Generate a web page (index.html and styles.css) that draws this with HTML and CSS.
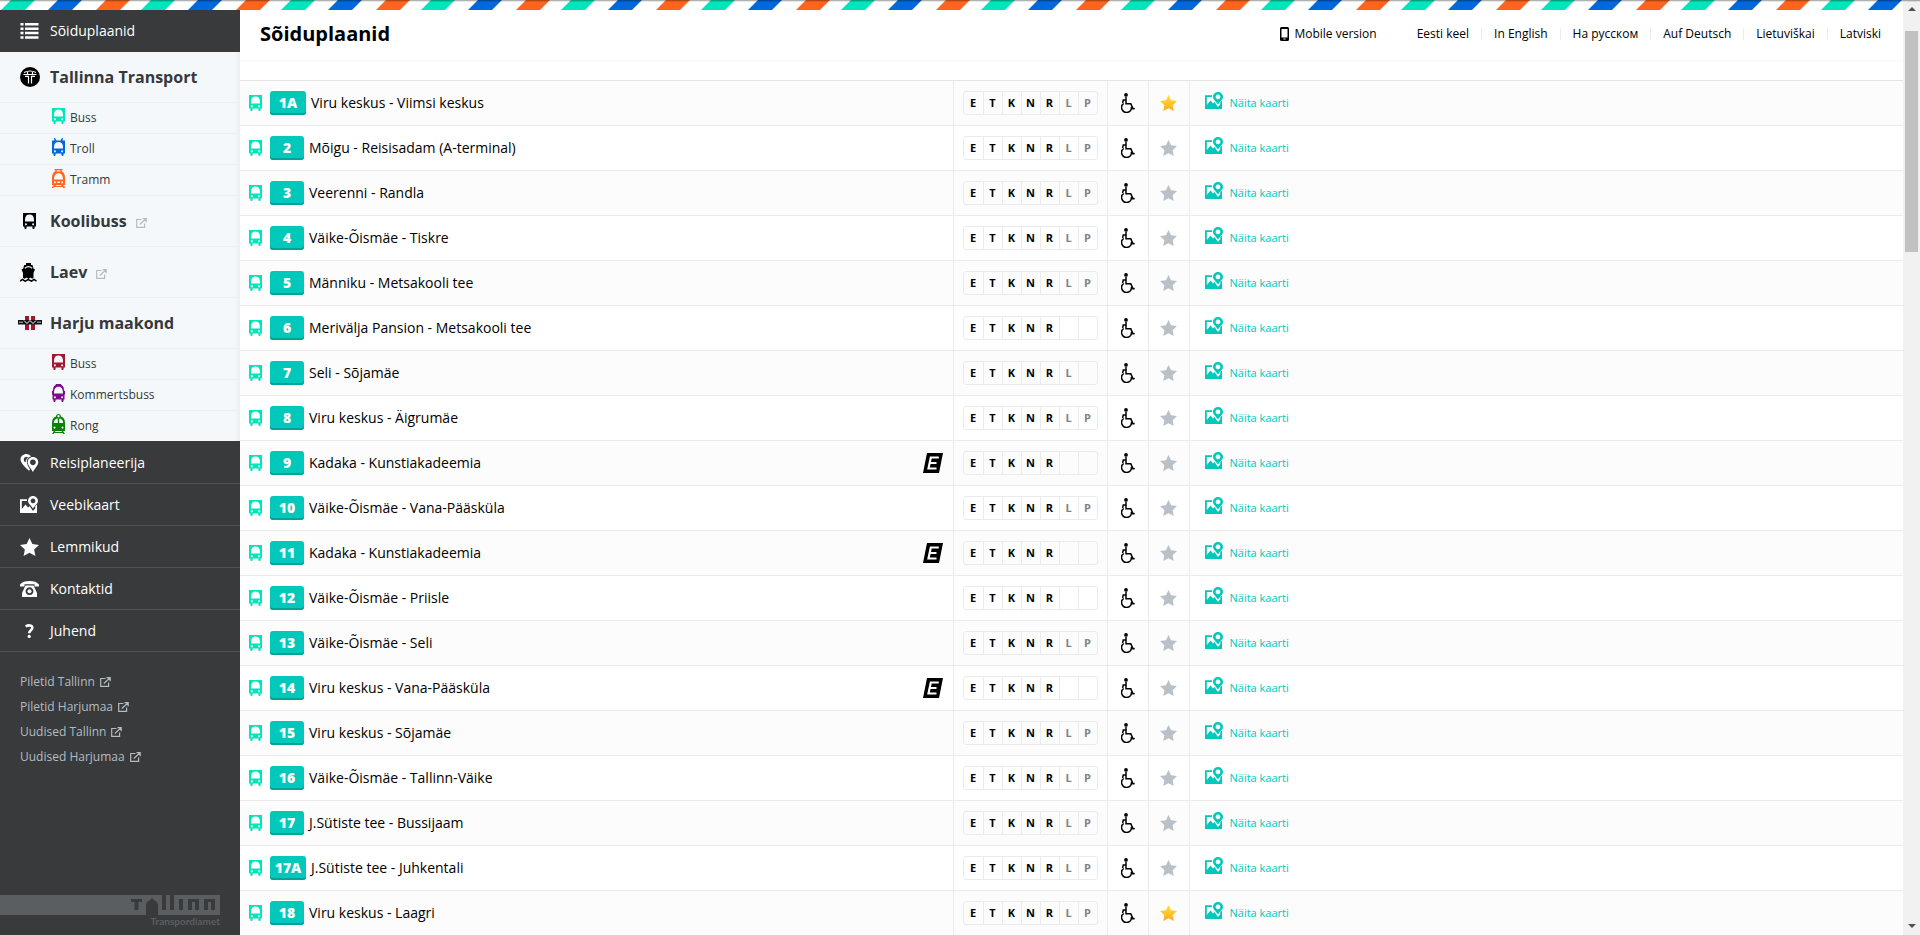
FILE: index.html
```html
<!DOCTYPE html>
<html lang="et">
<head>
<meta charset="utf-8">
<title>Sõiduplaanid</title>
<link rel="stylesheet" href="styles.css">
</head>
<body>
<svg class="sprite" aria-hidden="true">
  <symbol id="bus" viewBox="0 0 13 16"><path fill-rule="evenodd" d="M0 0H13V13.5H11.6V15.2L11 16H10L9.4 15.2V13.5H3.6V15.2L3 16H2L1.400 15.200V13.500H0ZM2 8.500H11V7C11 3.300 9.300 1.500 6.500 1.500S2 3.300 2 7ZM2.900 10.200a1 1 0 1 0 .01 0ZM10.100 10.200a1 1 0 1 0 .01 0Z"/></symbol>
  <symbol id="troll" viewBox="0 0 13 18"><path fill-rule="evenodd" d="M2 0H3L4.500 2.500H8.500L10 0H11L10.500 2.500H13V15.500H11.600V17L11 18H10L9.400 17V15.500H3.600V17L3 18H2L1.400 17V15.500H0V2.500H2.500ZM2 10.500H11V9C11 5.600 9.300 4 6.500 4S2 5.600 2 9ZM2.900 12.200a1 1 0 1 0 .01 0ZM10.100 12.200a1 1 0 1 0 .01 0Z"/></symbol>
  <symbol id="tram" viewBox="0 0 13 19"><path fill-rule="evenodd" d="M2.500 0H10.500V1.300H9.500L10 2.500C12 3.500 13 6 13 9V16H11L13 18V19H11.500L10.500 18H2.500L1.500 19H0V18L2 16H0V9C0 6 1 3.500 3 2.500L3.500 1.300H2.500ZM4.800 1.300 4.500 2.500H8.500L8.200 1.300ZM2 10.500H11C11 6.500 9.500 4.200 6.500 4.200S2 6.500 2 10.500ZM2.900 12.200a1 1 0 1 0 .01 0ZM10.100 12.200a1 1 0 1 0 .01 0ZM5 12.500V14H8V12.500ZM4 16 3.500 17H9.500L9 16Z"/></symbol>
  <symbol id="coach" viewBox="0 0 13 18"><path fill-rule="evenodd" d="M3.500 1 4 0H9L9.500 1C11.500 2 12 4 12 6.500L13 7V10L12.500 11V15.500H11.600V17L11 18H10L9.400 17V15.500H3.600V17L3 18H2L1.400 17V15.500H.5V11L0 10V7L1 6.500C1 4 1.500 2 3.500 1ZM2 9.500H11C11 5 9.500 2.800 6.500 2.800S2 5 2 9.500ZM2.900 12.200a1 1 0 1 0 .01 0ZM10.100 12.200a1 1 0 1 0 .01 0Z"/></symbol>
  <symbol id="train" viewBox="0 0 13 20"><path fill-rule="evenodd" d="M4 2.500C4 1 5 0 6.500 0S9 1 9 2.500C11.500 3.200 13 5.500 13 9V17H11L13 20H11.400L10.600 19H2.400L1.600 20H0L2 17H0V9C0 5.500 1.500 3.200 4 2.500ZM6.500 1A1.200 1.200 0 1 0 6.510 1ZM1.800 9H5.800V4.600C3.500 4.600 2 6.300 1.800 9ZM7.200 9H11.200C11 6.300 9.500 4.600 7.200 4.600ZM2.500 12.500a1 1 0 1 0 .01 0ZM10.500 12.500a1 1 0 1 0 .01 0ZM3.500 17 3 18H10L9.500 17Z"/></symbol>
  <symbol id="ship" viewBox="0 0 17 19"><path d="M6 0H11V2H12.500L13.500 5.500 15 6.500 13.500 10V15L12 15.800 10.500 14.500 8.500 16 6.500 14.500 5 15.800 3 15V10L1.500 6.500 3.200 5.500 4.200 2H6Z"/><path d="M4.800 5.200Q8.500 2.200 12.200 5.200" fill="none" stroke="#f4f8fa" stroke-width="1.200"/><path d="M0 18.200 2.500 16.500 5 18.200 8.300 16.500 11.500 18.200 14 16.500 16.500 18.200" fill="none" stroke="currentColor" stroke-width="1.500"/></symbol>
  <symbol id="list" viewBox="0 0 18 16"><path d="M0 0H3V2.500H0ZM4.500 0H18V2.500H4.500ZM0 4.400H3V6.900H0ZM4.500 4.400H18V6.900H4.500ZM0 8.800H3V11.300H0ZM4.500 8.800H18V11.300H4.500ZM0 13.200H3V15.700H0ZM4.500 13.200H18V15.700H4.500Z"/></symbol>
  <symbol id="tt" viewBox="0 0 20 20"><circle cx="10" cy="10" r="10"/><path fill="none" stroke="#fff" stroke-width="1.200" d="M4 5.500Q10 2.500 16 5.500M3.500 7.500H16.500M7.500 5V7.500M12.500 5V7.500M5 9.300H8.500V16.500M15 9.300H11.500V16.500"/></symbol>
  <symbol id="harju" viewBox="0 0 24 14"><path fill="#a01830" d="M7 0H11V14H7ZM13 0H17V14H13Z"/><path fill="#111" d="M0 4H24V8.500H0Z"/><path fill="#888" d="M1 5.500H5V7H1ZM19 5.500H23V7H19Z"/><path fill="none" stroke="#fff" d="M6 4.500 9 7.500 12 4.500 15 7.500 18 4.500"/></symbol>
  <symbol id="ext" viewBox="0 0 11 10"><path fill="none" stroke="currentColor" stroke-width="1.200" d="M5.500 1.500H.7V9.400H8.600V5.500M3.800 6.500 9.500 1.200M6.500.7H10.200V4.200"/></symbol>
  <symbol id="pins" viewBox="0 0 18 18"><path fill-rule="evenodd" d="M6 0C8 0 9.700 1 10.500 2.600C8 3 6.200 5 6.300 7.500C6.300 10 8 13 9.500 15.500L8.500 16.800C5 13.500 0 9 0 5.500C0 2.400 2.600 0 6 0ZM5.800 2.800A2.800 2.800 0 0 0 5.300 8.300C5.100 6 6 4.500 7.600 3.500A2.800 2.800 0 0 0 5.800 2.800Z"/><path fill-rule="evenodd" d="M12.400 3C15.500 3 17.800 5.300 17.800 8.200C17.800 11 14.500 14 12.400 18C10.300 14 7.200 11 7.200 8.200C7.200 5.300 9.500 3 12.400 3ZM12.400 5.400A2.900 2.900 0 1 0 12.410 5.400Z"/></symbol>
  <symbol id="map" viewBox="0 0 18 17"><path fill-rule="evenodd" d="M13 0C15.800 0 18 2.200 18 4.900C18 7.600 14.800 9.200 13 12.500C11.200 9.200 8 7.600 8 4.900C8 2.200 10.200 0 13 0ZM13 2.500A2.400 2.400 0 1 0 13.010 2.500Z"/><path d="M0 3.200H7V5H1.800V13L5.500 8.500 8 11.500 9.500 10 13 15 15.300 12.200V10L17 8.500V17H0Z"/></symbol>
  <symbol id="star" viewBox="0 0 18 17"><path d="M9 0 11.700 5.700 18 6.500 13.400 10.800 14.600 17 9 14 3.400 17 4.600 10.800 0 6.500 6.300 5.700Z"/></symbol>
  <symbol id="phone" viewBox="0 0 19 16"><path fill-rule="evenodd" d="M5.500 4.500H13.500L17 12V16H2V12ZM9.500 6.300A3.900 3.900 0 1 0 9.510 6.300Z"/><circle cx="9.500" cy="10.200" r="2"/><path d="M0 5.500V3.500C2 1 5 0 9.500 0S17 1 19 3.500V5.500H14.500V3.200H4.500V5.500Z"/></symbol>
  <symbol id="help" viewBox="0 0 9 14"><path fill="none" stroke="currentColor" stroke-width="2.600" d="M.8 2.600C2.500 1.100 7.300.6 7.300 3.700C7.300 6.300 4.200 6.200 4.200 9.300"/><circle cx="4.200" cy="12.400" r="1.600"/></symbol>
  <symbol id="mobile" viewBox="0 0 9 14"><path fill-rule="evenodd" d="M1.500 0H7.500Q9 0 9 1.500V12.500Q9 14 7.500 14H1.500Q0 14 0 12.500V1.500Q0 0 1.500 0ZM1.500 2V10.500H7.500V2ZM3.500 11.500V12.500H5.500V11.500Z"/></symbol>
  <symbol id="chair" viewBox="0 0 14 20"><circle cx="5" cy="1.900" r="1.900"/><path fill="none" stroke="currentColor" stroke-width="1.500" d="M5 4V10.700H9.800L12 15.800 13.700 15.400M5 7H2.300L1.600 10"/><path fill="none" stroke="currentColor" stroke-width="1.500" d="M2.700 10.500A4.900 4.900 0 1 0 10.400 14"/></symbol>
  <symbol id="express" viewBox="0 0 20 20"><path d="M4 0H20L16 20H0Z"/><path fill="none" stroke="#fff" stroke-width="2.200" d="M15.800 4.500H7.800L5.500 15.500H13.500M6.800 10H13.500"/></symbol>
  <linearGradient id="gold" x2="0" y2="1"><stop stop-color="#ffe23c"/><stop offset="1" stop-color="#ffa91c"/></linearGradient>
</svg>

<div class="page">
  <div class="view">
    <svg class="ribbon" aria-hidden="true">
      <defs><pattern id="stripes" width="140" height="10" patternUnits="userSpaceOnUse">
        <path fill="#00e5b9" d="M1 10 11 0H35L25 10Z"/><path fill="#0067dc" d="M48 10 58 0H82L72 10Z"/><path fill="#ff641e" d="M96 10 106 0H130L120 10Z"/>
      </pattern></defs>
      <rect width="100%" height="10" fill="url(#stripes)"/>
    </svg>
    <div class="columns">
      <aside class="sidebar">
        <nav>
          <a class="item" href="#"><svg class="i-list"><use href="#list"/></svg>Sõiduplaanid</a>
          <div class="modes">
            <a class="group" href="#"><svg class="i-tt"><use href="#tt"/></svg>Tallinna Transport</a>
            <a class="mode" href="#"><svg class="i-bus teal"><use href="#bus"/></svg>Buss</a>
            <a class="mode" href="#"><svg class="i-troll"><use href="#troll"/></svg>Troll</a>
            <a class="mode" href="#"><svg class="i-tram"><use href="#tram"/></svg>Tramm</a>
            <a class="group" href="#"><svg class="i-bus"><use href="#bus"/></svg>Koolibuss<svg class="i-ext"><use href="#ext"/></svg></a>
            <a class="group" href="#"><svg class="i-ship"><use href="#ship"/></svg>Laev<svg class="i-ext"><use href="#ext"/></svg></a>
            <a class="group" href="#"><svg class="i-harju"><use href="#harju"/></svg>Harju maakond</a>
            <a class="mode" href="#"><svg class="i-bus maroon"><use href="#bus"/></svg>Buss</a>
            <a class="mode" href="#"><svg class="i-coach"><use href="#coach"/></svg>Kommertsbuss</a>
            <a class="mode" href="#"><svg class="i-train"><use href="#train"/></svg>Rong</a>
          </div>
          <a class="item" href="#"><svg class="i-pins"><use href="#pins"/></svg>Reisiplaneerija</a>
          <a class="item" href="#"><svg class="i-map"><use href="#map"/></svg>Veebikaart</a>
          <a class="item" href="#"><svg class="i-fav"><use href="#star"/></svg>Lemmikud</a>
          <a class="item" href="#"><svg class="i-phone"><use href="#phone"/></svg>Kontaktid</a>
          <a class="item" href="#"><svg class="i-help"><use href="#help"/></svg>Juhend</a>
        </nav>
        <div class="links">
          <a href="#">Piletid Tallinn<svg class="i-ext"><use href="#ext"/></svg></a>
          <a href="#">Piletid Harjumaa<svg class="i-ext"><use href="#ext"/></svg></a>
          <a href="#">Uudised Tallinn<svg class="i-ext"><use href="#ext"/></svg></a>
          <a href="#">Uudised Harjumaa<svg class="i-ext"><use href="#ext"/></svg></a>
        </div>
        <div class="brand">
          <svg class="skyline" viewBox="0 0 220 20" role="img" aria-label="Tallinn">
            <path fill="#5b5e60" d="M0 0H220V20H0Z"/>
            <path fill="#393a3c" d="M131 4H142V7H138.500V15H134.500V7H131ZM146 20V10C146 7 149 6 152 3C155 6 158 7 158 10V20ZM162 0H166V15H162ZM170 0H174V15H170ZM179 4H183V15H179ZM188 15V4H199V15H195V7H192V15ZM204 15V4H215V15H211V7H208V15Z"/>
          </svg>
          <span>Transpordiamet</span>
        </div>
      </aside>
      <main>
        <header>
          <h1>Sõiduplaanid</h1>
          <a class="mobile" href="#"><svg class="i-mobile"><use href="#mobile"/></svg>Mobile version</a>
          <nav class="langs">
            <a href="#">Eesti keel</a><a href="#">In English</a><a href="#">На русском</a><a href="#">Auf Deutsch</a><a href="#">Lietuviškai</a><a href="#">Latviski</a>
          </nav>
        </header>
        <table>
          <colgroup><col><col class="c-days"><col class="c-icon"><col class="c-icon"><col></colgroup>
          <tbody id="routes"></tbody>
        </table>
      </main>
    </div>
  </div>
  <div class="scrollbar" aria-hidden="true"><span class="up"></span><span class="thumb"></span><span class="down"></span></div>
</div>
<script src="routes.js"></script>
</body>
</html>
```
FILE: styles.css
```css
* { box-sizing: border-box; }
body { margin: 0; background: #fff; color: #000; font: 14px/20px "Open Sans", "Noto Sans", sans-serif; }
a { color: inherit; text-decoration: none; }
svg { fill: currentColor; flex: none; }
.sprite { position: absolute; width: 0; height: 0; }

.page { display: flex; height: 100vh; overflow: hidden; }
.page::before { content: ""; position: absolute; inset: 0 0 auto; height: 2px; background: linear-gradient(#0006, #0000); }
.view { flex: 1; min-width: 0; display: flex; flex-direction: column; }
.ribbon { display: block; width: 100%; height: 10px; }
.columns { flex: 1; min-height: 0; display: flex; }

.sidebar { width: 240px; flex: none; display: flex; flex-direction: column; background: #393a3c; color: #fff; }
.item { display: flex; align-items: center; height: 42px; padding-left: 20px; border-bottom: 1px solid #505153; }
.item svg { margin-right: 11px; }
.item:first-child { border-bottom: 0; }
.modes { margin-bottom: 1px; background: linear-gradient(90deg, #f4f8fa 234px, #ebeff1); color: #36383b; }
.group { display: flex; align-items: center; height: 51px; padding-left: 50px; border-bottom: 1px solid #ebf0f2; font-size: 16px; font-weight: 700; }
.group svg:first-child { margin-left: -30px; }
.mode { display: flex; align-items: center; height: 31px; padding-left: 52px; border-bottom: 1px solid #ebf0f2; font-size: 12px; line-height: 16px; }
.mode svg { margin: 0 5px 4px 0; }
.mode:last-child { height: 30px; border-bottom: 0; }

.i-list { width: 19px; height: 16px; }
.i-tt { width: 20px; height: 20px; margin-right: 10px; color: #000; }
.i-bus { width: 13px; height: 16px; }
.group .i-bus { margin: 0 14px 0 3px; color: #000; }
.group .i-bus:first-child { margin-left: -27px; }
.i-troll { width: 13px; height: 18px; color: #0067dc; }
.i-tram { width: 13px; height: 19px; color: #ff641e; }
.i-coach { width: 13px; height: 18px; color: #80088c; }
.i-train { width: 13px; height: 20px; color: #078207; }
.i-ship { width: 17px; height: 19px; margin-right: 13px; color: #000; }
.i-harju { width: 24px; height: 14px; margin-right: 8px; }
.group .i-harju:first-child { margin-left: -32px; }
.teal { color: #00e5b9; }
.maroon { color: #a01830; }
.i-ext { width: 11px; height: 10px; }
.group .i-ext { margin: 4px 0 0 9px; color: #b3bcc1; }
.i-pins { width: 19px; height: 18px; }
.i-map { width: 18px; height: 17px; }
.i-fav { width: 19px; height: 18px; }
.i-phone { width: 19px; height: 16px; }
.item .i-help { width: 9px; height: 14px; margin: 0 16px 0 5px; }
.item .i-map { margin-right: 12px; }

.links { display: flex; flex-direction: column; padding: 17px 20px; font-size: 12px; line-height: 25px; color: #b3bcc1; }
.links a { display: flex; align-items: center; }
.links .i-ext { margin-left: 5px; }
.brand { margin: auto 20px 8px 0; color: #5b5e60; text-align: right; font: 700 10px/12px Lato, sans-serif; }
.skyline { display: block; width: 100%; height: 20px; }
.brand span { display: block; }

main { flex: 1; min-width: 0; }
header { display: flex; align-items: center; height: 51px; padding: 0 22px 3px 20px; font-size: 12px; border-bottom: 1px solid #f7f7f7; }
h1 { flex: 1; margin: 0; font-size: 20px; line-height: 28px; font-weight: 700; }
.mobile { display: flex; align-items: center; margin-right: 28px; }
.i-mobile { width: 9px; height: 14px; margin-right: 5px; }
.langs { display: flex; line-height: 12px; }
.langs a { padding: 0 12px; border-left: 1px solid #ececec; }
.langs a:first-child { border-left: 0; }
.langs a:last-child { padding-right: 0; }

table { width: 100%; margin-top: 19px; table-layout: fixed; border-collapse: separate; border-spacing: 0; border-top: 1px solid #e4e4e4; }
.c-days { width: 154px; }
.c-icon { width: 41px; }
td { height: 45px; padding: 0; border-bottom: 1px solid #ebebeb; border-right: 1px solid #ebebeb; text-align: center; }
td:last-child { border-right: 0; }
tr:nth-child(odd) { background: #fcfcfc; }
td svg { display: block; }
.route { display: flex; align-items: center; padding: 0 10px 0 9px; }
.route .i-bus { margin-right: 8px; color: #00e5b9; }
.badge { min-width: 34px; height: 24px; margin-right: 5px; padding: 0 4px; border-radius: 3px; background: #00c8bb; box-shadow: inset 0 -2px #00a398; color: #fff; font-weight: 800; line-height: 24px; }
.badge--suffix { min-width: 36px; }
.i-express { width: 20px; height: 20px; margin-left: auto; }
.days { display: flex; width: 135px; margin-left: 9px; border: 1px solid #ebebeb; border-radius: 3px; font-size: 11px; line-height: 22px; font-weight: 700; }
.days span { width: 19px; height: 22px; border-left: 1px solid #ebebeb; }
.days span:first-child { border-left: 0; }
.days .weekend { color: #808488; }
.i-chair { width: 14px; height: 20px; margin: 0 auto; }
.favourite { display: block; margin: 0 auto; padding: 0; border: 0; background: none; color: #b9c1c7; }
.favourite svg { width: 17px; height: 16px; }
.favourite--on svg { fill: url(#gold); }
.show { display: flex; align-items: center; padding-left: 15px; color: #00c8bb; font-size: 11px; }
.show svg { width: 18px; height: 17px; margin: 0 7px 5px 0; }

.scrollbar { display: flex; flex-direction: column; align-items: center; width: 17px; padding: 7px 0; background: #f1f1f1; }
.up, .down { width: 0; height: 0; border: 4px solid transparent; }
.up { border-top: 0; border-bottom-color: #505050; }
.down { margin-top: auto; border-bottom: 0; border-top-color: #505050; }
.thumb { width: 13px; height: 24%; margin-top: 20px; background: #c1c1c1; }
```
FILE: routes.js
```js
const routes = [
  ["1A", "Viru keskus - Viimsi keskus", 7, "fav"], ["2", "Mõigu - Reisisadam (A-terminal)", 7], ["3", "Veerenni - Randla", 7],
  ["4", "Väike-Õismäe - Tiskre", 7], ["5", "Männiku - Metsakooli tee", 7], ["6", "Merivälja Pansion - Metsakooli tee", 5],
  ["7", "Seli - Sõjamäe", 6], ["8", "Viru keskus - Äigrumäe", 7], ["9", "Kadaka - Kunstiakadeemia", 5, "express"],
  ["10", "Väike-Õismäe - Vana-Pääsküla", 7], ["11", "Kadaka - Kunstiakadeemia", 5, "express"], ["12", "Väike-Õismäe - Priisle", 5],
  ["13", "Väike-Õismäe - Seli", 7], ["14", "Viru keskus - Vana-Pääsküla", 5, "express"], ["15", "Viru keskus - Sõjamäe", 7],
  ["16", "Väike-Õismäe - Tallinn-Väike", 7], ["17", "J.Sütiste tee - Bussijaam", 7], ["17A", "J.Sütiste tee - Juhkentali", 7],
  ["18", "Viru keskus - Laagri", 7, "fav"]
];
const icon = (id, cls) => `<svg class="${cls}"><use href="#${id}"/></svg>`;
const days = count => [..."ETKNRLP"].map((d, i) => `<span class="${i > 4 ? "weekend" : ""}">${i < count ? d : ""}</span>`).join("");

document.getElementById("routes").innerHTML = routes.map(([no, name, count, flag]) => `
<tr>
  <td><a class="route" href="#">${icon("bus", "i-bus")}<span class="badge ${/A/.test(no) ? "badge--suffix" : ""}">${no}</span>${name}${flag === "express" ? icon("express", "i-express") : ""}</a></td>
  <td><div class="days">${days(count)}</div></td>
  <td>${icon("chair", "i-chair")}</td>
  <td><button type="button" class="favourite ${flag === "fav" ? "favourite--on" : ""}" aria-label="Lemmik ${no}">${icon("star", "")}</button></td>
  <td><a class="show" href="#">${icon("map", "")}Näita kaarti</a></td>
</tr>`).join("");
```
